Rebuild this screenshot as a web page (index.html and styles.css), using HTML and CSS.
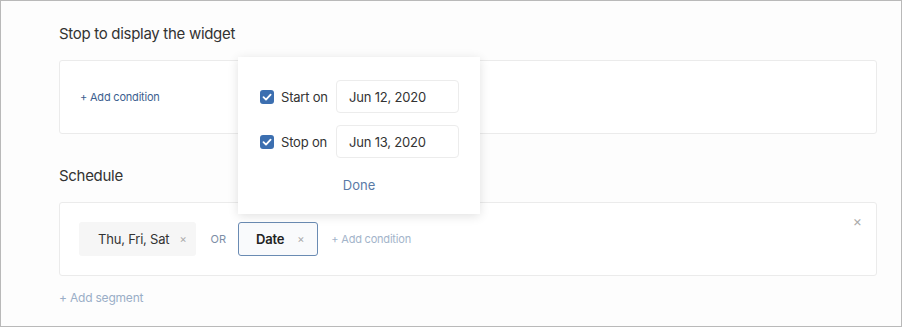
FILE: index.html
```html
<!DOCTYPE html>
<html lang="en">
<head>
    <meta charset="UTF-8">
    <meta name="viewport" content="width=device-width, initial-scale=1.0">
    <title>Widget display rules</title>
    <link rel="stylesheet" href="styles.css">
</head>
<body>
    <div class="frame">
        <h3 class="section-title">Stop to display the widget</h3>
        <div class="card">
            <a class="add-link">+ Add condition</a>
        </div>

        <h3 class="section-title schedule-title">Schedule</h3>
        <div class="card card-segment">
            <span class="chip">Thu, Fri, Sat <span class="chip-x">&times;</span></span>
            <span class="or">OR</span>
            <span class="chip chip-active">Date <span class="chip-x">&times;</span></span>
            <a class="add-link add-link-faded">+ Add condition</a>
            <span class="card-close">&times;</span>
        </div>

        <a class="add-segment">+ Add segment</a>

        <div class="popover">
            <div class="date-row">
                <span class="check">
                    <svg width="14" height="14" viewBox="0 0 14 14"><rect width="14" height="14" rx="3" fill="#3c6fb0"/><path d="M3.5 7.2 L6 9.6 L10.6 4.6" fill="none" stroke="#fff" stroke-width="1.8" stroke-linecap="round" stroke-linejoin="round"/></svg>
                </span>
                <span class="date-label">Start on</span>
                <span class="date-input">Jun 12, 2020</span>
            </div>
            <div class="date-row">
                <span class="check">
                    <svg width="14" height="14" viewBox="0 0 14 14"><rect width="14" height="14" rx="3" fill="#3c6fb0"/><path d="M3.5 7.2 L6 9.6 L10.6 4.6" fill="none" stroke="#fff" stroke-width="1.8" stroke-linecap="round" stroke-linejoin="round"/></svg>
                </span>
                <span class="date-label">Stop on</span>
                <span class="date-input">Jun 13, 2020</span>
            </div>
            <div class="done">Done</div>
        </div>
    </div>
</body>
</html>
```

FILE: styles.css
```css
* {
    box-sizing: border-box;
}
body {
    margin: 0;
    font-family: Inter, "Open Sans", sans-serif;
    background: #fff;
}
.frame {
    position: relative;
    width: 902px;
    height: 327px;
    border: 1px solid #b9b9b9;
    background: #fdfdfd;
    padding: 23px 24px 0 58px;
}
.section-title {
    margin: 0 0 16px 0;
    font-size: 15px;
    line-height: 20px;
    font-weight: 400;
    color: #333;
    letter-spacing: -0.3px;
}
.schedule-title {
    margin-top: 32px;
}
.card {
    position: relative;
    height: 74px;
    border: 1px solid #ebebeb;
    border-radius: 3px;
    background: #fff;
    display: flex;
    align-items: center;
    padding: 0 20px;
}
.add-link {
    font-size: 11px;
    color: #3d5f90;
    letter-spacing: -0.2px;
}
.add-link-faded {
    color: #a3b4ca;
    margin-left: 13px;
}
.card-segment {
    padding-left: 19px;
}
.chip {
    display: flex;
    align-items: center;
    height: 34px;
    padding: 0 10px 0 19px;
    background: #f6f6f6;
    border-radius: 3px;
    font-size: 13px;
    color: #333;
    letter-spacing: -0.2px;
}
.chip-x {
    margin-left: 10px;
    font-size: 11px;
    color: #aaa;
}
.chip-active {
    height: 34px;
    padding: 0 13px 0 17px;
    background: #f9fafc;
    border: 1px solid #6a8bb3;
    font-weight: 600;
    color: #222;
}
.chip-active .chip-x {
    margin-left: 13px;
    font-weight: 400;
}
.or {
    margin: 0 12px 0 14px;
    font-size: 11px;
    color: #7d8ea6;
}
.card-close {
    position: absolute;
    top: 9px;
    right: 14px;
    font-size: 14px;
    color: #aaa;
}
.add-segment {
    display: block;
    margin-top: 14px;
    font-size: 12px;
    line-height: 16px;
    color: #9aaec7;
    letter-spacing: -0.2px;
}
.popover {
    position: absolute;
    left: 237px;
    top: 56px;
    width: 242px;
    height: 157px;
    background: #fff;
    box-shadow: 0 2px 10px rgba(0, 0, 0, 0.12);
    padding: 23px 20px 0 22px;
}
.date-row {
    display: flex;
    align-items: center;
    height: 33px;
    margin-bottom: 12px;
}
.check {
    display: flex;
    width: 14px;
    height: 14px;
}
.date-label {
    width: 55px;
    margin-left: 7px;
    font-size: 13px;
    color: #333;
    letter-spacing: -0.2px;
}
.date-input {
    display: flex;
    align-items: center;
    width: 123px;
    height: 33px;
    padding-left: 12px;
    border: 1px solid #ececec;
    border-radius: 4px;
    font-size: 13px;
    color: #333;
    letter-spacing: -0.2px;
}
.done {
    margin-top: 19px;
    text-align: center;
    font-size: 13px;
    color: #5a7aa6;
    padding-right: 2px;
}
```
